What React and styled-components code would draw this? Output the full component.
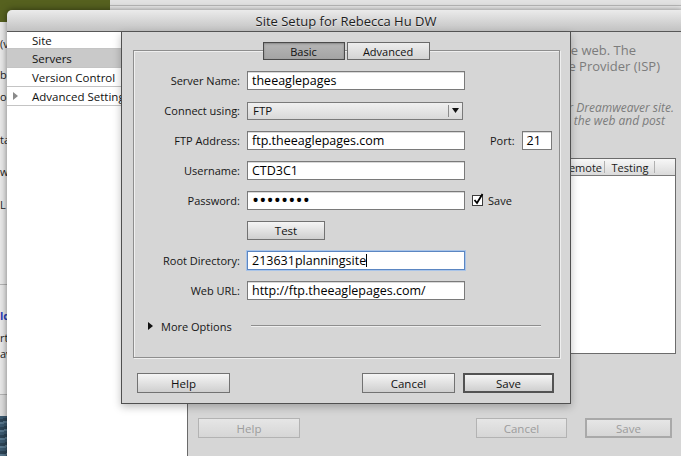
import styled, { createGlobalStyle } from "styled-components";

const GlobalStyle = createGlobalStyle`
  html, body { margin: 0; padding: 0; }
  body {
    font-family: "Open Sans", "Liberation Sans", sans-serif;
    background: #dcdcdc;
  }
`;

const Desktop = styled.div`
  position: relative;
  width: 681px;
  height: 456px;
  overflow: hidden;
  background: #d9d9d9;
`;

const OliveWindow = styled.div`
  position: absolute;
  left: 0;
  top: 0;
  width: 110px;
  height: 26px;
  background: #56611f;
`;

const TopWindow = styled.div`
  position: absolute;
  left: 110px;
  top: 0;
  right: 0;
  height: 12px;
  background: linear-gradient(#e2e2e2 0 5px, #b9b9b9 5px 6px, #ededed 6px);
`;

const LeftWindow = styled.div`
  position: absolute;
  left: 0;
  top: 22px;
  width: 7px;
  bottom: 0;
  overflow: hidden;
  background: #e9e9e9;
  display: flex;
  flex-direction: column;
  font-size: 11px;
  line-height: 14px;
  color: #222;
`;

const Peek = styled.div`
  margin-top: ${(p) => p.$gap}px;
  white-space: nowrap;
  color: ${(p) => (p.$link ? "#2b3fb8" : "#222")};
  font-weight: ${(p) => (p.$link ? 700 : 400)};
`;

const PeekBreak = styled.div`
  margin-top: ${(p) => p.$gap}px;
  border-top: 1px solid #b4b4b4;
  background: ${(p) => p.$bg};
  height: ${(p) => p.$h}px;
`;

const Photo = styled.div`
  margin-top: auto;
  height: 41px;
  background: repeating-linear-gradient(
    170deg,
    #3c5a70 0 3px,
    #2d4557 3px 6px,
    #58778d 6px 8px
  );
`;

const MainWindow = styled.div`
  position: absolute;
  left: 7px;
  top: 10px;
  width: 678px;
  height: 460px;
  display: flex;
  flex-direction: column;
  border-radius: 5px 5px 0 0;
  box-shadow: 0 0 7px rgba(0, 0, 0, 0.5);
  overflow: hidden;
`;

const TitleBar = styled.div`
  height: 21px;
  flex: none;
  display: flex;
  align-items: center;
  justify-content: center;
  background: linear-gradient(#ebebeb, #c2c2c2);
  border-bottom: 1px solid #585858;
  font-size: 13px;
  color: #1e1e1e;
  text-shadow: 0 1px 0 rgba(255, 255, 255, 0.5);
`;

const WindowBody = styled.div`
  position: relative;
  flex: 1;
  display: flex;
`;

const Sidebar = styled.ul`
  width: 180px;
  flex: none;
  margin: 0;
  padding: 0;
  list-style: none;
  background: #fff;
  border-right: 1px solid #6a6a6a;
  font-size: 11.5px;
  color: #111;
`;

const SideItem = styled.li`
  height: 18px;
  display: flex;
  align-items: center;
  padding-left: 25px;
  border-bottom: 1px solid #c4c4c4;
  background: ${(p) => (p.$active ? "#c9c9c9" : "#fff")};
  &:first-child {
    height: 16px;
  }
`;

const Disclosure = styled.svg`
  width: 5px;
  height: 8px;
  margin-left: -19px;
  margin-right: 14px;
  flex: none;
`;

const Panel = styled.div`
  flex: 1;
  display: flex;
  flex-direction: column;
  padding: 10px 9px 0 10px;
  background: #d6d6d6;
  overflow: hidden;
`;

const Intro = styled.div`
  align-self: flex-end;
  width: 107px;
  overflow: hidden;
  display: flex;
  flex-direction: column;
  font-size: 13px;
  line-height: 16px;
  color: #7c7c7c;
  margin-top: ${(p) => p.$top || 0}px;
  ${(p) => p.$italic && "font-style: italic; font-size: 12px; line-height: 13px;"}
`;

const Line = styled.div`
  display: flex;
  justify-content: flex-end;
  white-space: nowrap;
  margin-right: ${(p) => p.$trim}px;
`;

const ServerTable = styled.div`
  align-self: flex-end;
  width: 119px;
  margin-top: 31px;
  height: 194px;
  display: flex;
  flex-direction: column;
  border: 1px solid #6c6c6c;
  border-left: none;
  background: #fff;
`;

const TableHead = styled.div`
  height: 16px;
  display: flex;
  border-bottom: 1px solid #7a7a7a;
  background: linear-gradient(#f7f7f7, #dadada);
  font-size: 11px;
  color: #1a1a1a;
  overflow: hidden;
`;

const HeadCell = styled.div`
  width: ${(p) => (p.$w ? `${p.$w}px` : "auto")};
  flex: ${(p) => (p.$w ? "none" : 1)};
  display: flex;
  align-items: center;
  justify-content: ${(p) => (p.$w ? "center" : "flex-end")};
  padding-right: ${(p) => (p.$w ? 0 : 3)}px;
  position: relative;
  white-space: nowrap;
  &::after {
    content: "";
    position: absolute;
    right: 0;
    top: 2px;
    bottom: 2px;
    border-right: 1px solid #b0b0b0;
  }
`;

const HeadFill = styled.div`
  width: 20px;
`;

const ButtonRow = styled.div`
  display: flex;
  align-items: center;
  gap: ${(p) => p.$gap || 8}px;
  margin: ${(p) => p.$margin};
`;

const Spacer = styled.div`
  flex: 1;
`;

const PushButton = styled.div`
  box-sizing: border-box;
  width: ${(p) => p.$w}px;
  height: ${(p) => p.$h || 20}px;
  display: flex;
  align-items: center;
  justify-content: center;
  font-size: 11.5px;
  color: ${(p) => (p.$disabled ? "#9c9c9c" : "#111")};
  border: ${(p) => (p.$default ? 2 : 1)}px solid
    ${(p) =>
      p.$disabled
        ? p.$default
          ? "#a9a9a9"
          : "#b3b3b3"
        : p.$default
        ? "#535353"
        : "#727272"};
  background: ${(p) =>
    p.$disabled
      ? "linear-gradient(#e6e6e6, #d6d6d6)"
      : "linear-gradient(#f5f5f5, #cfcfcf)"};
`;

const Sheet = styled.div`
  position: absolute;
  left: 114px;
  top: 0;
  width: 450px;
  height: 372px;
  box-sizing: border-box;
  padding: 18px 10px 0 11px;
  display: flex;
  flex-direction: column;
  background: #d6d6d6;
  border: 1px solid #505050;
  border-top: none;
  box-shadow: 0 3px 8px rgba(0, 0, 0, 0.25);
`;

const GroupBox = styled.div`
  height: 308px;
  box-sizing: border-box;
  border: 1px solid #8e8e8e;
  box-shadow: inset 1px 1px 0 #efefef, 1px 1px 0 #efefef;
  display: flex;
  flex-direction: column;
`;

const TabStrip = styled.div`
  display: flex;
  justify-content: center;
  gap: 2px;
  margin-top: -9px;
  padding-right: 1px;
`;

const Tab = styled.div`
  box-sizing: border-box;
  width: ${(p) => p.$w}px;
  height: 18px;
  display: flex;
  align-items: center;
  justify-content: center;
  font-size: 11px;
  color: #111;
  border: 1px solid ${(p) => (p.$active ? "#4a4a4a" : "#6a6a6a")};
  background: ${(p) =>
    p.$active
      ? "linear-gradient(#b6b6b6, #a4a4a4)"
      : "linear-gradient(#ededed, #d3d3d3)"};
  box-shadow: ${(p) => (p.$active ? "inset 0 1px 2px rgba(0,0,0,0.25)" : "none")};
`;

const FormGrid = styled.div`
  display: grid;
  grid-template-columns: 106px 218px 1fr;
  grid-auto-rows: 19px;
  column-gap: 7px;
  row-gap: 11px;
  align-items: center;
  margin-top: 11px;
`;

const Label = styled.div`
  text-align: right;
  font-size: 11px;
  color: #151515;
  white-space: nowrap;
`;

const TextField = styled.div`
  box-sizing: border-box;
  width: ${(p) => p.$w || 218}px;
  height: 19px;
  display: flex;
  align-items: center;
  padding-left: 4px;
  background: #fff;
  border: 1px solid ${(p) => (p.$focus ? "#5b86c2" : "#7a7a7a")};
  box-shadow: ${(p) =>
    p.$focus ? "0 0 0 1px #a9c4e8" : "inset 0 1px 0 #d9d9d9"};
  font-size: 12.5px;
  color: #000;
  white-space: nowrap;
  overflow: hidden;
`;

const Dots = styled.span`
  font-size: 19px;
  letter-spacing: 0.1px;
  line-height: 1;
  margin-top: -1px;
`;

const Caret = styled.span`
  display: inline-block;
  width: 1px;
  height: 13px;
  background: #000;
`;

const Select = styled.div`
  box-sizing: border-box;
  width: 216px;
  height: 18px;
  display: flex;
  align-items: center;
  padding-left: 5px;
  border: 1px solid #7a7a7a;
  background: linear-gradient(#f0f0f0, #d9d9d9);
  font-size: 11.5px;
  color: #111;
`;

const SelectArrow = styled.div`
  margin-left: auto;
  width: 12px;
  height: 12px;
  border-left: 1px solid #8c8c8c;
  display: flex;
  align-items: center;
  justify-content: center;
  padding-right: 1px;
`;

const Extra = styled.div`
  display: flex;
  align-items: center;
  gap: ${(p) => p.$gap}px;
  padding-left: ${(p) => p.$pad}px;
  font-size: 11px;
  color: #151515;
`;

const CheckBox = styled.svg`
  width: 13px;
  height: 13px;
  flex: none;
  margin-top: -2px;
`;

const MoreRow = styled.div`
  display: flex;
  align-items: center;
  height: 14px;
  margin: 19px 18px 0 14px;
  font-size: 11px;
  color: #151515;
`;

const MoreText = styled.span`
  margin: 0 19px 0 8px;
`;

const Rule = styled.div`
  flex: 1;
  border-top: 1px solid #8e8e8e;
  border-bottom: 1px solid #efefef;
`;

export default function App() {
  return (
    <>
      <GlobalStyle />
      <Desktop>
        <OliveWindow />
        <TopWindow />
        <LeftWindow>
          <Peek $gap={15}>(v</Peek>
          <Peek $gap={17}>be</Peek>
          <Peek $gap={8}>ol</Peek>
          <Peek $gap={29}>ta</Peek>
          <Peek $gap={18}>w</Peek>
          <Peek $gap={19}>L</Peek>
          <PeekBreak $gap={72} $bg="#f6f6f6" $h={0} />
          <Peek $gap={24} $link>ld</Peek>
          <Peek $gap={8}>rt</Peek>
          <Peek $gap={2}>av</Peek>
          <PeekBreak $gap={33} $bg="#dedede" $h={22} />
          <Photo />
        </LeftWindow>

        <MainWindow>
          <TitleBar>Site Setup for Rebecca Hu DW</TitleBar>
          <WindowBody>
            <Sidebar>
              <SideItem>Site</SideItem>
              <SideItem $active>Servers</SideItem>
              <SideItem>Version Control</SideItem>
              <SideItem>
                <Disclosure viewBox="0 0 5 8">
                  <path d="M0 0 L5 4 L0 8 Z" fill="#8a8a8a" />
                </Disclosure>
                Advanced Settings
              </SideItem>
            </Sidebar>

            <Panel>
              <Intro>
                <Line $trim={40}>on the web. The</Line>
                <Line $trim={16}>Service Provider (ISP)</Line>
              </Intro>
              <Intro $italic $top={27}>
                <Line $trim={2}>your Dreamweaver site.</Line>
                <Line $trim={11}>to the web and post</Line>
              </Intro>
              <ServerTable>
                <TableHead>
                  <HeadCell>Remote</HeadCell>
                  <HeadCell $w={50}>Testing</HeadCell>
                  <HeadFill />
                </TableHead>
              </ServerTable>
              <ButtonRow $margin="64px 4px 0 0" $gap={18}>
                <PushButton $w={102} $disabled>Help</PushButton>
                <Spacer />
                <PushButton $w={91} $disabled>Cancel</PushButton>
                <PushButton $w={87} $disabled $default>Save</PushButton>
              </ButtonRow>
            </Panel>

            <Sheet>
              <GroupBox>
                <TabStrip>
                  <Tab $w={82} $active>Basic</Tab>
                  <Tab $w={83}>Advanced</Tab>
                </TabStrip>
                <FormGrid>
                  <Label>Server Name:</Label>
                  <TextField>theeaglepages</TextField>
                  <div />

                  <Label>Connect using:</Label>
                  <Select>
                    FTP
                    <SelectArrow>
                      <svg width="7" height="5" viewBox="0 0 7 5">
                        <path d="M0 0 H7 L3.5 5 Z" fill="#111" />
                      </svg>
                    </SelectArrow>
                  </Select>
                  <div />

                  <Label>FTP Address:</Label>
                  <TextField>ftp.theeaglepages.com</TextField>
                  <Extra $pad={18} $gap={7}>
                    Port:
                    <TextField $w={30}>21</TextField>
                  </Extra>

                  <Label>Username:</Label>
                  <TextField>CTD3C1</TextField>
                  <div />

                  <Label>Password:</Label>
                  <TextField>
                    <Dots>••••••••</Dots>
                  </TextField>
                  <Extra $pad={0} $gap={3}>
                    <CheckBox viewBox="0 0 13 13">
                      <rect x="0.5" y="2.5" width="10" height="10" fill="#fff" stroke="#3c3c3c" />
                      <path d="M2.5 7 L5 10 L10.5 1" fill="none" stroke="#000" strokeWidth="1.8" />
                    </CheckBox>
                    Save
                  </Extra>

                  <div />
                  <PushButton $w={78} $h={19}>Test</PushButton>
                  <div />

                  <Label>Root Directory:</Label>
                  <TextField $focus>
                    213631planningsite
                    <Caret />
                  </TextField>
                  <div />

                  <Label>Web URL:</Label>
                  <TextField>http://ftp.theeaglepages.com/</TextField>
                  <div />
                </FormGrid>
                <MoreRow>
                  <svg width="5" height="8" viewBox="0 0 5 8">
                    <path d="M0 0 L5 4 L0 8 Z" fill="#111" />
                  </svg>
                  <MoreText>More Options</MoreText>
                  <Rule />
                </MoreRow>
              </GroupBox>
              <ButtonRow $margin="15px 6px 0 4px" $gap={8}>
                <PushButton $w={93}>Help</PushButton>
                <Spacer />
                <PushButton $w={93}>Cancel</PushButton>
                <PushButton $w={91} $default>Save</PushButton>
              </ButtonRow>
            </Sheet>
          </WindowBody>
        </MainWindow>
      </Desktop>
    </>
  );
}
